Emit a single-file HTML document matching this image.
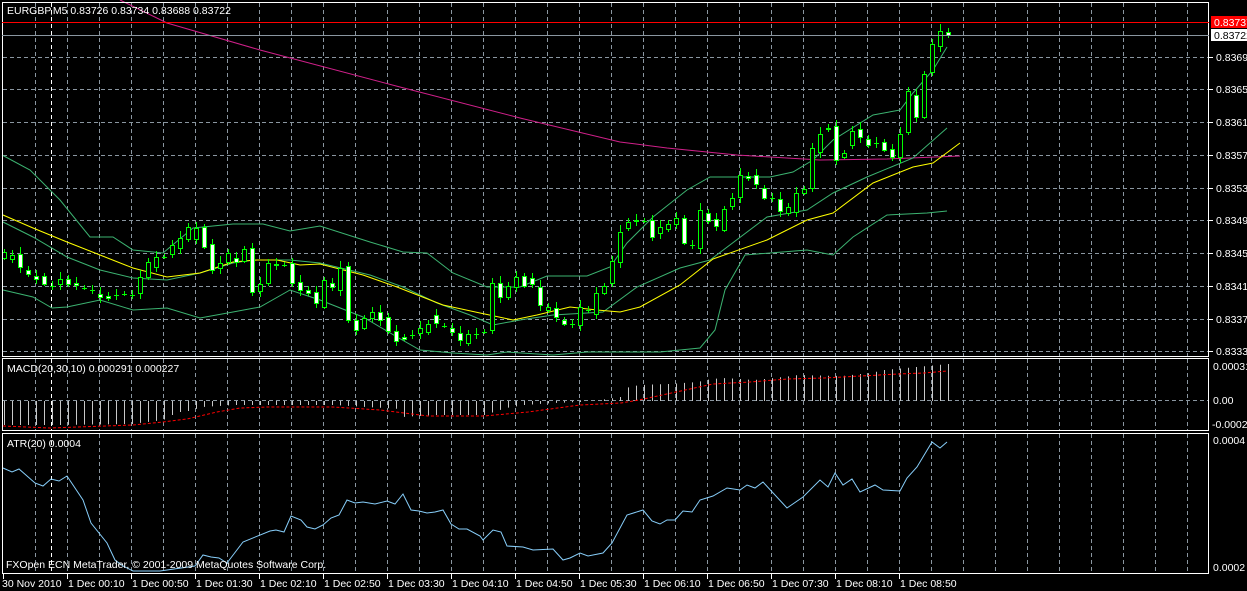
<!DOCTYPE html>
<html><head><meta charset="utf-8"><style>
html,body{margin:0;padding:0;background:#000;width:1247px;height:591px;overflow:hidden}
svg{display:block}
text{font-family:"Liberation Sans",sans-serif;font-size:10.5px;fill:#fff}
</style></head><body>
<svg id="s" width="1247" height="591" xmlns="http://www.w3.org/2000/svg">
<rect width="1247" height="591" fill="#000"/>
<g id="grid" stroke="#8a96a0" stroke-width="1" stroke-dasharray="4,3"></g>
<g id="ind"></g>
<g id="cand"></g>
<g fill="none" stroke="#fff" stroke-width="1">
<rect x="2.5" y="2.5" width="1206" height="354"/>
<rect x="2.5" y="358.5" width="1206" height="72"/>
<rect x="2.5" y="433.5" width="1206" height="140"/>
</g>
<line x1="2" y1="22.5" x2="1209" y2="22.5" stroke="#f00"/>
<line x1="2" y1="35.5" x2="1209" y2="35.5" stroke="#8a96a0"/>
<rect x="1211" y="16" width="36" height="12" fill="#f00"/>
<text x="1214" y="26">0.83737</text>
<rect x="1211" y="29" width="36" height="12" fill="#fff"/>
<text x="1214" y="39" style="fill:#000">0.83722</text>
<g id="lab"></g>
<text x="7" y="14">EURGBP,M5  0.83726 0.83734 0.83688 0.83722</text>
<text x="7" y="372">MACD(20,30,10) 0.000291 0.000227</text>
<text x="7" y="447">ATR(20) 0.0004</text>
<text x="6" y="568">FXOpen ECN MetaTrader, © 2001-2009 MetaQuotes Software Corp.</text>
</svg>
<script>
var NS="http://www.w3.org/2000/svg";
function el(p,t,a,txt){var e=document.createElementNS(NS,t);for(var k in a)e.setAttribute(k,a[k]);if(txt)e.textContent=txt;document.getElementById(p).appendChild(e);return e;}
// grid
for(var x=35;x<=1190;x+=32){[[3,356],[359,430],[434,573]].forEach(function(r){el("grid","line",{x1:x+.5,y1:r[0],x2:x+.5,y2:r[1]});});}
[[3,356],[359,430],[434,573]].forEach(function(r){el("grid","line",{x1:51.5,y1:r[0],x2:51.5,y2:r[1],stroke:"#fff"});});
var hy=[57,89,122,155,188,220,253,286,319,351],hl=["0.83695","0.83655","0.83615","0.83575","0.83535","0.83495","0.83455","0.83415","0.83375","0.83335"];
hy.forEach(function(y,i){el("grid","line",{x1:3,y1:y+.5,x2:1208,y2:y+.5});el("lab","line",{x1:1209,y1:y+.5,x2:1213,y2:y+.5,stroke:"#fff"});el("lab","text",{x:1216,y:y+4},hl[i]);});
el("grid","line",{x1:3,y1:400.5,x2:1208,y2:400.5});
el("lab","text",{x:1213,y:370},"0.000316");el("lab","text",{x:1213,y:404},"0.00");el("lab","text",{x:1212,y:428},"-0.00022");
el("lab","text",{x:1213,y:444},"0.0004");el("lab","text",{x:1213,y:571},"0.0002");
var tl=["30 Nov 2010","1 Dec 00:10","1 Dec 00:50","1 Dec 01:30","1 Dec 02:10","1 Dec 02:50","1 Dec 03:30","1 Dec 04:10","1 Dec 04:50","1 Dec 05:30","1 Dec 06:10","1 Dec 06:50","1 Dec 07:30","1 Dec 08:10","1 Dec 08:50"];
tl.forEach(function(t,i){var x=3+64*i;el("lab","line",{x1:x+.5,y1:574,x2:x+.5,y2:579,stroke:"#fff"});el("lab","text",{x:i?x+1:2,y:587},t);});
function pl(pts,c,extra){var a={points:pts,fill:"none",stroke:c,"stroke-width":1};for(var k in extra)a[k]=extra[k];el("ind","polyline",a);}
// magenta MA
pl("120,0 167,23 260,50 400,87 520,118 620,142 667,148 737,155 820,160 887,159 960,156","#d0208a");
// bands
pl("2,155 30,170 60,200 90,237 113,237 133,250 163,253 193,228 233,224 263,224 290,231 320,226 370,242 403,252 427,253 453,273 487,287 520,287 547,276 587,276 610,267 627,243 653,217 687,190 710,177 770,177 793,172 813,160 833,140 873,115 900,110 913,93 933,70 947,47","#3cb371");
pl("3,222 33,237 67,257 100,270 133,278 167,280 200,273 233,263 253,260 290,260 320,263 370,275 403,287 437,303 470,315 493,325 520,320 553,315 587,313 603,312 637,287 680,268 710,260 767,217 807,210 833,193 867,177 913,158 947,128","#3cb371");
pl("3,290 33,297 52,308 67,307 100,300 133,310 167,308 200,318 233,312 260,307 290,290 320,300 363,317 397,337 420,350 453,353 487,355 507,352 553,355 587,352 620,352 660,352 700,348 715,330 725,290 745,255 770,253 807,250 833,255 853,237 887,215 927,213 947,211","#3cb371");
pl("3,215 33,228 67,242 100,255 133,268 167,277 200,273 233,262 257,260 277,260 300,265 320,264 363,275 397,287 443,305 480,313 513,320 537,315 570,307 597,310 620,312 640,307 680,285 713,259 767,240 807,220 833,213 873,183 913,167 933,163 960,143","#ffff00");
// ATR
pl("3,468 12,472 19,469 35,483 43,486 51,479 59,481 67,476 83,500 91,523 107,543 115,560 123,566 133,571 160,571 195,566 203,555 211,557 219,558 227,563 243,542 270,531 276,530 284,532 291,516 301,520 307,527 315,529 323,525 331,518 339,515 347,500 355,503 363,502 375,504 387,501 395,504 403,494 411,510 419,511 427,513 435,512 443,510 451,524 459,529 467,529 480,536 483,540 493,530 501,532 507,546 523,547 533,550 553,549 563,560 570,558 580,553 588,556 603,553 612,543 627,515 643,510 652,521 660,524 667,520 675,520 683,511 692,512 700,500 713,496 727,488 740,490 747,485 755,488 763,482 787,508 803,497 820,480 828,487 835,473 843,485 852,479 860,492 875,485 883,490 900,491 907,478 917,467 932,442 940,448 947,442","#87cefa");
// MACD
function interp(pts,x){for(var i=1;i<pts.length;i++){if(x<=pts[i][0]){var a=pts[i-1],b=pts[i];return a[1]+(b[1]-a[1])*(x-a[0])/(b[0]-a[0]);}}return pts[pts.length-1][1];}
var hist=[[0,425],[60,425],[133,424],[139,423],[163,420],[172,415],[180,412],[188,411],[203,407],[233,405],[333,405],[400,409],[402,417],[435,415],[484,415],[506,408],[524,405],[554,403],[580,402],[600,400],[620,397],[610,391],[625,388],[639,385],[668,384],[697,382],[711,379],[725,378],[754,380],[783,377],[798,375],[841,376],[870,373],[884,370],[948,364]];
for(var k=0;k<=118;k++){var x=4+8*k;var y=interp(hist,x);if(Math.abs(y-401)>0.8)el("ind","line",{x1:x+.5,y1:401,x2:x+.5,y2:y,stroke:"#c8c8c8"});}
pl("3,426 50,428 133,425 163,422 187,419 217,412 240,408 267,407 333,407 380,410 428,416 484,416 528,412 580,405 621,403 639,400 676,392 713,384 750,382 787,379 824,378 861,376 898,374 924,373 947,371","#f00",{"stroke-dasharray":"3,2"});
// candles [open,close]
var C=[[258,252],[259,255],[254,267],[270,274],[276,279],[276,284],[286,286],[284,279],[279,284],[283,285],[288,288],[290,290],[294,297],[296,298],[295,295],[294,294],[295,295],[293,277],[277,262],[267,257],[257,257],[254,245],[248,238],[239,227],[239,228],[227,247],[244,270],[268,263],[262,253],[258,262],[261,249],[248,292],[291,284],[283,263],[264,265],[265,265],[263,283],[282,290],[290,293],[292,303],[307,280],[283,287],[290,268],[266,320],[320,330],[328,318],[318,312],[312,320],[317,331],[331,341],[337,339],[335,335],[333,328],[332,324],[315,323],[326,326],[328,332],[333,340],[343,334],[334,334],[332,332],[330,283],[283,297],[297,286],[287,277],[276,286],[278,284],[287,305],[310,307],[308,317],[320,324],[324,324],[325,307],[310,310],[314,293],[293,286],[283,261],[262,232],[228,222],[220,221],[221,221],[220,237],[233,227],[229,224],[224,218],[218,243],[245,245],[248,210],[213,221],[219,226],[230,209],[206,198],[197,175],[176,178],[175,184],[188,198],[198,198],[199,211],[213,207],[212,193],[193,189],[188,148],[152,134],[129,128],[126,160],[157,153],[145,131],[129,137],[139,145],[143,143],[142,150],[149,157],[157,134],[132,91],[95,117],[117,74],[72,44],[46,31],[32,35]];
C.forEach(function(c,k){var x=4+8*k;var t=Math.min(c[0],c[1]),b=Math.max(c[0],c[1]);var w=((k*7)%5)+3;
el("cand","line",{x1:x+.5,y1:t-w,x2:x+.5,y2:b+w-1,stroke:"#00ff00"});
if(b-t<1){el("cand","line",{x1:x-2,y1:t+.5,x2:x+3,y2:t+.5,stroke:"#00ff00"});}
else el("cand","rect",{x:x-1.5,y:t+.5,width:4,height:b-t,fill:(c[1]<c[0]?"#000":"#fff"),stroke:"#00ff00"});});
</script>
</body></html>
